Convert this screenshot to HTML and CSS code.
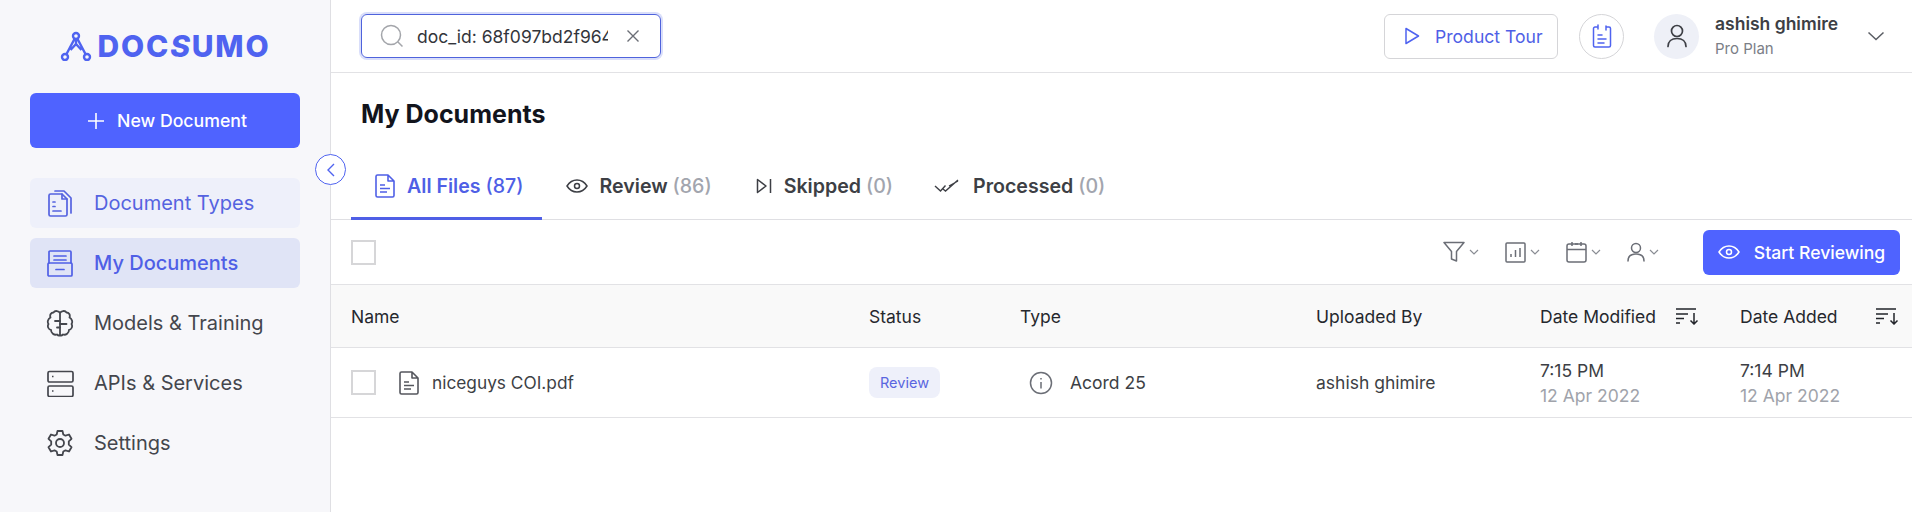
FILE: index.html
```html
<!DOCTYPE html>
<html lang="en">

<head>
    <meta charset="UTF-8" />
    <meta name="viewport" content="width=device-width, initial-scale=1.0" />
    <title>My Documents - Docsumo</title>
    <link rel="stylesheet" href="styles.css">
</head>

<body>
    <div class="app">
        <aside class="sidebar">
            <div class="logo">
                <svg width="32" height="30" viewBox="0 0 32 30" fill="none" stroke="#4f63f0" stroke-width="2.4">
                    <circle cx="16" cy="5" r="3" />
                    <circle cx="5" cy="26" r="3" />
                    <circle cx="27" cy="26" r="3" />
                    <path d="M14.600 7.700 6.400 23.300M17.400 7.700l8.200 15.600M16 8v5l-5.500 6M16 13l5.500 6" />
                </svg>
                <span class="logo-text">DOC<i>S</i>UMO</span>
            </div>

            <button class="new-doc">
                <svg width="18" height="18" viewBox="0 0 18 18" stroke="#fff" stroke-width="1.6">
                    <path d="M9 1v16M1 9h16" />
                </svg>
                New Document
            </button>

            <nav class="nav">
                <a class="nav-item hovered">
                    <svg width="26" height="28" viewBox="0 0 26 28" fill="none" stroke="currentColor" stroke-width="1.7" stroke-linejoin="round" stroke-linecap="round">
                        <path d="M2 6.500a1.500 1.500 0 0 1 1.500-1.500H15l5 5v15.500a1.500 1.500 0 0 1-1.500 1.500h-15A1.500 1.500 0 0 1 2 25.500z" />
                        <path d="M15 5v5h5M6 13h2M6 17.500h2M6 22h8M8 2h9l7 7v15" />
                    </svg>
                    Document Types
                </a>
                <a class="nav-item active">
                    <svg width="28" height="28" viewBox="0 0 28 28" fill="none" stroke="currentColor" stroke-width="1.700" stroke-linejoin="round" stroke-linecap="round">
                        <path d="M3 14V3a1 1 0 0 1 1-1h20a1 1 0 0 1 1 1v11M8 7h12M8 11h12" />
                        <path d="M2 15a1 1 0 0 1 1-1h22a1 1 0 0 1 1 1v11a1 1 0 0 1-1 1H3a1 1 0 0 1-1-1zM10 20.500h8" />
                    </svg>
                    My Documents
                </a>
                <a class="nav-item">
                    <svg width="28" height="28" viewBox="0 0 28 28" fill="none" stroke="currentColor" stroke-width="1.800" stroke-linejoin="round" stroke-linecap="round">
                        <path d="M14 4C13 2 9 1 7.500 3.500 5 3.500 3.500 6 4.500 8.500 2 10 1 13 2.500 15c-1.500 2.500 0 5.500 2.500 6 0 3 3 5.500 6 4.500 1 1 2 1.500 3 .5 1 1 2 .5 3-.5 3 1 6-1.500 6-4.500 2.500-.5 4-3.500 2.500-6 1.500-2 .5-5-2-6.500 1-2.500-.5-5-3-5C19 1 15 2 14 4zM14 4v22" />
                        <path d="M14 12H9M14 18.500h-3M14 15h6.500" />
                    </svg>
                    Models &amp; Training
                </a>
                <a class="nav-item">
                    <svg width="28" height="28" viewBox="0 0 28 28" fill="none" stroke="currentColor" stroke-width="1.700" stroke-linejoin="round">
                        <rect x="2" y="2.500" width="25" height="10.500" rx="1.500" />
                        <rect x="2" y="17" width="25" height="10.500" rx="1.500" />
                        <path d="M6 7.500h1.500M6 22h1.500" />
                    </svg>
                    APIs &amp; Services
                </a>
                <a class="nav-item">
                    <svg width="28" height="28" viewBox="0 0 28 28" fill="none" stroke="currentColor" stroke-width="1.800" stroke-linejoin="round">
                        <circle cx="14" cy="14" r="4" />
                        <path d="M11.500 2h5l.8 3.500 2.200 1.200 3.500-1.200 2.500 4.300-2.700 2.500v3.400l2.700 2.500-2.500 4.300-3.500-1.200-2.200 1.200-.8 3.500h-5l-.8-3.500-2.200-1.200-3.500 1.200L2.500 18.200l2.700-2.500v-3.400L2.500 9.800 5 5.500l3.500 1.200 2.200-1.200z" />
                    </svg>
                    Settings
                </a>
            </nav>

            <button class="collapse">
                <svg width="12" height="16" viewBox="0 0 12 16" fill="none" stroke="#4f63f0" stroke-width="1.400">
                    <path d="M9 2 3 8l6 6" />
                </svg>
            </button>
        </aside>

        <main class="main">
            <header class="topbar">
                <div class="search">
                    <svg width="24" height="24" viewBox="0 0 24 24" fill="none" stroke="#a3a5aa" stroke-width="1.500">
                        <circle cx="11" cy="11" r="9.500" />
                        <path d="m18 18 4.500 4.500" />
                    </svg>
                    <span class="search-text">doc_id: 68f097bd2f964a0b</span>
                    <svg width="14" height="14" viewBox="0 0 14 14" stroke="#6b6e76" stroke-width="1.400">
                        <path d="m1.500 1.500 11 11M12.500 1.500l-11 11" />
                    </svg>
                </div>
                <div class="top-right">
                    <button class="tour">
                        <svg width="16" height="18" viewBox="0 0 16 18" fill="none" stroke="#4f63f0" stroke-width="1.500" stroke-linejoin="round">
                            <path d="M2 1.500 14.500 9 2 16.500z" />
                        </svg>
                        Product Tour
                    </button>
                    <button class="round-btn">
                        <svg width="20" height="26" viewBox="0 0 20 26" fill="none" stroke="#4f63f0" stroke-width="1.500" stroke-linecap="round" stroke-linejoin="round">
                            <path d="M6 4H3a1.500 1.500 0 0 0-1.500 1.500v17A1.500 1.500 0 0 0 3 24h14a1.500 1.500 0 0 0 1.500-1.500v-17A1.500 1.500 0 0 0 17 4h-3M6 2v4M14 3v4M6 12h4M6 16h8M6 20h6" />
                        </svg>
                    </button>
                    <div class="avatar">
                        <svg width="20" height="24" viewBox="0 0 20 24" fill="none" stroke="#3d3f45" stroke-width="1.700" stroke-linecap="round">
                            <circle cx="10" cy="7" r="5.500" />
                            <path d="M1 22.500c0-5 3.500-8 9-8s9 3 9 8" />
                        </svg>
                    </div>
                    <div class="user-info">
                        <div class="user-name">ashish ghimire</div>
                        <div class="user-plan">Pro Plan</div>
                    </div>
                    <svg class="user-caret" width="18" height="10" viewBox="0 0 18 10" fill="none" stroke="#5a5d64" stroke-width="1.500">
                        <path d="m1.500 1.500 7.500 7 7.500-7" />
                    </svg>
                </div>
            </header>

            <h1 class="page-title">My Documents</h1>

            <div class="tabs">
                <a class="tab tab-active">
                    <svg width="20" height="24" viewBox="0 0 20 24" fill="none" stroke="currentColor" stroke-width="1.600" stroke-linejoin="round">
                        <path d="M1 2.500A1.500 1.500 0 0 1 2.500 1H13l6 6v14.500a1.500 1.500 0 0 1-1.500 1.500h-15A1.500 1.500 0 0 1 1 21.500zM13 1v6h6M5 11h5M5 14.500h10M5 18h7" />
                    </svg>
                    <span>All Files <span class="count">(87)</span></span>
                </a>
                <a class="tab">
                    <svg width="22" height="14" viewBox="0 0 22 14" fill="none" stroke="#3d3f45" stroke-width="1.500">
                        <path d="M1 7c2.500-4 6-6 10-6s7.500 2 10 6c-2.500 4-6 6-10 6S3.500 11 1 7z" />
                        <circle cx="11" cy="7" r="2.500" />
                    </svg>
                    <span>Review <span class="count">(86)</span></span>
                </a>
                <a class="tab">
                    <svg width="16" height="16" viewBox="0 0 16 16" fill="none" stroke="#3d3f45" stroke-width="1.500" stroke-linejoin="round">
                        <path d="M1.500 1.500 10 8l-8.500 6.500zM14.500 1v14" />
                    </svg>
                    <span>Skipped <span class="count">(0)</span></span>
                </a>
                <a class="tab">
                    <svg width="27" height="14" viewBox="0 0 27 14" fill="none" stroke="#3d3f45" stroke-width="1.400">
                        <path d="m1 7 5.500 5 5-5.500M9 10l2.500 2L24 1M15 7l9-5" />
                    </svg>
                    <span>Processed <span class="count">(0)</span></span>
                </a>
            </div>

            <div class="toolbar">
                <span class="checkbox"></span>
                <div class="tools">
                    <span class="tool">
                        <svg width="22" height="22" viewBox="0 0 22 22" fill="none" stroke="#6b6e76" stroke-width="1.500" stroke-linejoin="round">
                            <path d="M1 1.500h20l-7.500 9V20l-5-2v-7.500z" />
                        </svg>
                        <svg class="caret" width="10" height="6" viewBox="0 0 10 6" fill="none" stroke="#8a8d94" stroke-width="1.200">
                            <path d="m1 1 4 4 4-4" />
                        </svg>
                    </span>
                    <span class="tool">
                        <svg width="21" height="21" viewBox="0 0 21 21" fill="none" stroke="#6b6e76" stroke-width="1.500">
                            <rect x="1" y="1" width="19" height="19" rx="1" />
                            <path d="M6 15v-3M10.500 15V8M15 15V6" />
                        </svg>
                        <svg class="caret" width="10" height="6" viewBox="0 0 10 6" fill="none" stroke="#8a8d94" stroke-width="1.200">
                            <path d="m1 1 4 4 4-4" />
                        </svg>
                    </span>
                    <span class="tool">
                        <svg width="21" height="22" viewBox="0 0 21 22" fill="none" stroke="#6b6e76" stroke-width="1.500">
                            <rect x="1" y="3" width="19" height="18" rx="2" />
                            <path d="M1 8.500h19M6 1v4M15 1v4M9 3h3" />
                        </svg>
                        <svg class="caret" width="10" height="6" viewBox="0 0 10 6" fill="none" stroke="#8a8d94" stroke-width="1.200">
                            <path d="m1 1 4 4 4-4" />
                        </svg>
                    </span>
                    <span class="tool">
                        <svg width="18" height="20" viewBox="0 0 18 20" fill="none" stroke="#6b6e76" stroke-width="1.500" stroke-linecap="round">
                            <circle cx="9" cy="6" r="4.500" />
                            <path d="M1 19c0-4.500 3-7 8-7s8 2.500 8 7" />
                        </svg>
                        <svg class="caret" width="10" height="6" viewBox="0 0 10 6" fill="none" stroke="#8a8d94" stroke-width="1.200">
                            <path d="m1 1 4 4 4-4" />
                        </svg>
                    </span>
                </div>
                <button class="start-btn">
                    <svg width="22" height="14" viewBox="0 0 22 14" fill="none" stroke="#fff" stroke-width="1.500">
                        <path d="M1 7c2.500-4 6-6 10-6s7.500 2 10 6c-2.500 4-6 6-10 6S3.500 11 1 7z" />
                        <circle cx="11" cy="7" r="2.500" />
                    </svg>
                    Start Reviewing
                </button>
            </div>

            <div class="table-row table-head">
                <div>Name</div>
                <div>Status</div>
                <div>Type</div>
                <div>Uploaded By</div>
                <div class="sort-cell">
                    Date Modified
                    <svg width="24" height="18" viewBox="0 0 24 18" fill="none" stroke="#22242a" stroke-width="1.500">
                        <path d="M1 2h20M1 7h12M1 11.500h8M1 16h4M19 6v11M15.500 13.500 19 17l3.500-3.500" />
                    </svg>
                </div>
                <div class="sort-cell">
                    Date Added
                    <svg width="24" height="18" viewBox="0 0 24 18" fill="none" stroke="#22242a" stroke-width="1.500">
                        <path d="M1 2h20M1 7h12M1 11.500h8M1 16h4M19 6v11M15.500 13.500 19 17l3.500-3.500" />
                    </svg>
                </div>
            </div>

            <div class="table-row table-body">
                <div class="file-cell">
                    <span class="checkbox"></span>
                    <svg width="20" height="24" viewBox="0 0 20 24" fill="none" stroke="#55575e" stroke-width="1.600" stroke-linejoin="round">
                        <path d="M1 2.500A1.500 1.500 0 0 1 2.500 1H13l6 6v14.500a1.500 1.500 0 0 1-1.500 1.500h-15A1.500 1.500 0 0 1 1 21.500zM13 1v6h6M5 11h5M5 14.500h10M5 18h7" />
                    </svg>
                    niceguys COI.pdf
                </div>
                <div><span class="badge">Review</span></div>
                <div class="type-cell">
                    <svg width="24" height="24" viewBox="0 0 24 24" fill="none" stroke="#6b6e76" stroke-width="1.500">
                        <circle cx="12" cy="12" r="10.500" />
                        <path d="M12 11v6.500M12 7v1.500" />
                    </svg>
                    Acord 25
                </div>
                <div>ashish ghimire</div>
                <div class="date-cell">7:15 PM<span>12 Apr 2022</span></div>
                <div class="date-cell">7:14 PM<span>12 Apr 2022</span></div>
            </div>
        </main>
    </div>
</body>

</html>
```

FILE: styles.css
```css
* {
    box-sizing: border-box;
}

body {
    margin: 0;
    font-family: Inter, "Liberation Sans", sans-serif;
    color: #3d3f45;
    background: #fff;
    overflow: hidden;
}

button {
    font-family: inherit;
    cursor: pointer;
}

svg {
    flex-shrink: 0;
    display: block;
}

.app {
    display: flex;
    height: 512px;
}

/* sidebar */
.sidebar {
    position: relative;
    width: 331px;
    flex-shrink: 0;
    padding: 30px 30px 0;
    background: #f7f7fa;
    border-right: 1px solid #dfdfe3;
}

.logo {
    display: flex;
    align-items: center;
    justify-content: center;
    gap: 6px;
    height: 32px;
}

.logo-text {
    font-size: 30px;
    font-weight: 800;
    letter-spacing: 1.800px;
    color: #4f63f0;
}

.new-doc {
    display: flex;
    align-items: center;
    justify-content: center;
    gap: 12px;
    width: 100%;
    height: 55px;
    margin-top: 31px;
    padding-left: 10px;
    border: none;
    border-radius: 6px;
    background: #4f63ff;
    color: #fff;
    font-size: 17.700px;
    font-weight: 500;
}

.nav {
    display: flex;
    flex-direction: column;
    gap: 10px;
    margin-top: 30px;
}

.nav-item {
    display: flex;
    align-items: center;
    gap: 20px;
    height: 50px;
    padding-left: 16px;
    border-radius: 6px;
    font-size: 20px;
    color: #44464d;
}

.nav-item svg {
    width: 28px;
}

.nav-item.hovered {
    background: #eef0fa;
    color: #5563e0;
}

.nav-item.active {
    background: #e0e4f6;
    color: #4f5fe6;
    font-weight: 500;
}

.collapse {
    position: absolute;
    top: 154px;
    left: 315px;
    display: flex;
    align-items: center;
    justify-content: center;
    width: 31px;
    height: 31px;
    padding: 0;
    border: 1px solid #4f63f0;
    border-radius: 50%;
    background: #fff;
}

/* main area */
.main {
    flex: 1;
    min-width: 0;
}

.topbar {
    display: flex;
    align-items: center;
    justify-content: space-between;
    height: 73px;
    padding: 0 27px 0 30px;
    border-bottom: 1px solid #e2e2e5;
}

.search {
    display: flex;
    align-items: center;
    width: 300px;
    height: 44px;
    padding: 0 20px 0 18px;
    border: 1px solid #4f63dc;
    border-radius: 6px;
    box-shadow: 0 0 0 2px #d9defa;
}

.search-text {
    width: 193px;
    margin: 0 18px 0 13px;
    overflow: hidden;
    white-space: nowrap;
    font-size: 17.500px;
    color: #33353b;
}

.top-right {
    display: flex;
    align-items: center;
}

.tour {
    display: flex;
    align-items: center;
    gap: 15px;
    width: 174px;
    height: 45px;
    padding: 0 0 0 19px;
    border: 1px solid #d5d5d8;
    border-radius: 6px;
    background: #fff;
    color: #4f5fe6;
    font-size: 17.600px;
}

.round-btn {
    display: flex;
    align-items: center;
    justify-content: center;
    width: 45px;
    height: 45px;
    margin-left: 21px;
    padding: 0;
    border: 1px solid #d5d5d8;
    border-radius: 50%;
    background: #fff;
}

.avatar {
    display: flex;
    align-items: center;
    justify-content: center;
    width: 45px;
    height: 45px;
    margin-left: 30px;
    border-radius: 50%;
    background: #eef0f7;
}

.user-info {
    width: 152px;
    margin-left: 16px;
}

.user-name {
    font-size: 17.500px;
    font-weight: 600;
    line-height: 26px;
    color: #3d3f45;
}

.user-plan {
    font-size: 15px;
    line-height: 24px;
    color: #7b7e86;
}

.page-title {
    margin: 0;
    padding: 26px 0 0 30px;
    font-size: 25px;
    font-weight: 700;
    line-height: 30px;
    color: #12141c;
}

.tabs {
    display: flex;
    height: 72px;
    margin-top: 19px;
    padding-left: 20px;
    border-bottom: 1px solid #dfdfe3;
}

.tab {
    display: flex;
    align-items: center;
    gap: 12px;
    padding: 7px 20px 0 24px;
    margin-bottom: -1px;
    border-bottom: 3px solid transparent;
    font-size: 19.600px;
    font-weight: 600;
    color: #3d3f45;
    white-space: pre;
}

.tab:last-child {
    margin-left: -3px;
}

.tab-active {
    padding-right: 18px;
    color: #4f5fe6;
    border-bottom-color: #4f5fe6;
}

.count {
    font-weight: 500;
    color: #a2a5ae;
}

.tab-active .count {
    color: #4f5fe6;
}

.checkbox {
    display: block;
    flex-shrink: 0;
    width: 25px;
    height: 25px;
    border: 2px solid #d6d6d8;
    background: #fff;
}

.toolbar {
    display: flex;
    align-items: center;
    height: 65px;
    padding: 0 12px 0 20px;
    border-bottom: 1px solid #e2e2e5;
}

.tools {
    display: flex;
    align-items: center;
    gap: 26px;
    margin-left: auto;
    margin-right: 44px;
}

.tool {
    display: flex;
    align-items: center;
    gap: 4px;
}

.start-btn {
    display: flex;
    align-items: center;
    justify-content: center;
    gap: 14px;
    width: 197px;
    height: 45px;
    border: none;
    border-radius: 6px;
    background: #4f63ff;
    color: #fff;
    font-size: 17.600px;
    font-weight: 500;
}

/* table */
.table-row {
    display: grid;
    grid-template-columns: 518px 151px 296px 224px 200px 159px;
    align-items: center;
    padding: 0 12px 0 20px;
    font-size: 17.500px;
    border-bottom: 1px solid #e2e2e5;
}

.table-head {
    height: 63px;
    background: #f9f9f9;
    color: #26282e;
}

.table-body {
    height: 70px;
}

.sort-cell {
    display: flex;
    align-items: center;
    justify-content: space-between;
}

.table-head .sort-cell:nth-child(5) {
    padding-right: 41px;
}

.file-cell {
    display: flex;
    align-items: center;
    gap: 13px;
    font-size: 17.300px;
}

.file-cell .checkbox {
    margin-right: 10px;
}

.badge {
    display: inline-block;
    height: 31px;
    padding: 0 11px;
    border-radius: 8px;
    background: #eef0fa;
    color: #5a66e0;
    font-size: 14.500px;
    line-height: 31px;
}

.type-cell {
    display: flex;
    align-items: center;
    gap: 17px;
    padding-left: 9px;
}

.date-cell {
    line-height: 25px;
    color: #3d3f45;
}

.date-cell span {
    display: block;
    color: #a0a3ab;
}
```
